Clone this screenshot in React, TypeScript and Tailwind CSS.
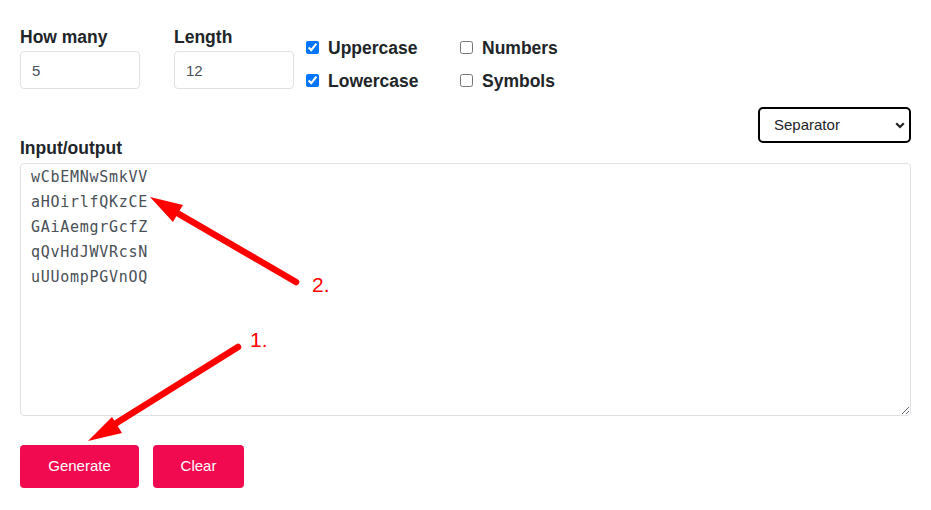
import { useState } from 'react'

const LINES = ['wCbEMNwSmkVV', 'aHOirlfQKzCE', 'GAiAemgrGcfZ', 'qQvHdJWVRcsN', 'uUUompPGVnOQ']

function Check({ label, checked }: { label: string; checked: boolean }) {
  const [on, setOn] = useState(checked)
  return (
    <label className="block h-[33px] leading-[33px] text-[17.5px] font-bold text-[#212529] whitespace-nowrap">
      <input
        type="checkbox"
        checked={on}
        onChange={() => setOn(!on)}
        className="ml-[4px] mr-[9px] mb-[3px] w-[13px] h-[13px] align-baseline"
      />
      {label}
    </label>
  )
}

function Arrows() {
  return (
    <svg className="absolute inset-0 pointer-events-none" width="931" height="510" viewBox="0 0 931 510">
      {/* 2. */}
      <line x1="296" y1="282" x2="172" y2="210" stroke="#ff0000" strokeWidth="6.5" strokeLinecap="round" />
      <polygon points="150,197 183,205 178,213 173,222" fill="#ff0000" />
      {/* 1. */}
      <line x1="238" y1="347" x2="110" y2="427" stroke="#ff0000" strokeWidth="6.5" strokeLinecap="round" />
      <polygon points="88,441 112,417 117,425 122,433" fill="#ff0000" />
    </svg>
  )
}

export default function App() {
  return (
    <div className="relative w-[931px] h-[510px] bg-white overflow-hidden" style={{ fontFamily: '"Liberation Sans", Arial, sans-serif' }}>
      <div className="px-[20px] pt-[26px]">
        {/* ── Options row ───────────────────────────── */}
        <div className="flex items-start">
          <div className="w-[120px]">
            <p className="h-[22px] leading-[22px] text-[17.5px] font-bold text-[#212529]">How many</p>
            <input
              defaultValue="5"
              className="mt-[3px] w-[120px] h-[38px] px-[11px] border border-[#dee2e6] rounded-[4px] text-[15px] text-[#495057] outline-none"
            />
          </div>
          <div className="w-[120px] ml-[34px]">
            <p className="h-[22px] leading-[22px] text-[17.5px] font-bold text-[#212529]">Length</p>
            <input
              defaultValue="12"
              className="mt-[3px] w-[120px] h-[38px] px-[11px] border border-[#dee2e6] rounded-[4px] text-[15px] text-[#495057] outline-none"
            />
          </div>
          <div className="ml-[8px] mt-[6px] grid grid-cols-[154px_auto]">
            <Check label="Uppercase" checked />
            <Check label="Numbers" checked={false} />
            <Check label="Lowercase" checked />
            <Check label="Symbols" checked={false} />
          </div>
        </div>

        {/* ── Separator ─────────────────────────────── */}
        <div className="flex justify-end mt-[9px]">
          <div className="relative">
            <select className="appearance-none w-[153px] h-[36px] pl-[14px] border-2 border-black rounded-[5px] bg-white text-[15px] text-[#212529] outline-none">
              <option>Separator</option>
            </select>
            <svg className="absolute right-[6px] top-[15px] pointer-events-none" width="10" height="7" viewBox="0 0 10 7">
              <path d="M1.2 1.2 L5 5 L8.8 1.2" fill="none" stroke="#222" strokeWidth="2.2" />
            </svg>
          </div>
        </div>

        {/* ── Input/output ──────────────────────────── */}
        <p className="mt-[-6px] h-[22px] leading-[22px] text-[17.5px] font-bold text-[#212529]">Input/output</p>
        <textarea
          defaultValue={LINES.join('\n')}
          spellCheck={false}
          className="mt-[4px] block w-full h-[253px] px-[10px] pt-[1px] border border-[#dee2e6] rounded-[4px] text-[15px] leading-[25px] tracking-[0.72px] text-[#495057] outline-none resize-y"
          style={{ fontFamily: '"DejaVu Sans Mono", monospace' }}
        />

        {/* ── Actions ───────────────────────────────── */}
        <div className="flex gap-[14px] mt-[29px]">
          <button className="w-[119px] h-[43px] rounded-[4px] bg-[#f20a51] text-white text-[15px]">Generate</button>
          <button className="w-[91px] h-[43px] rounded-[4px] bg-[#f20a51] text-white text-[15px]">Clear</button>
        </div>
      </div>

      <Arrows />
      <span className="absolute left-[250px] top-[329px] text-[21px] leading-[21px] text-[#ff0000]">1.</span>
      <span className="absolute left-[312px] top-[274px] text-[21px] leading-[21px] text-[#ff0000]">2.</span>
    </div>
  )
}
